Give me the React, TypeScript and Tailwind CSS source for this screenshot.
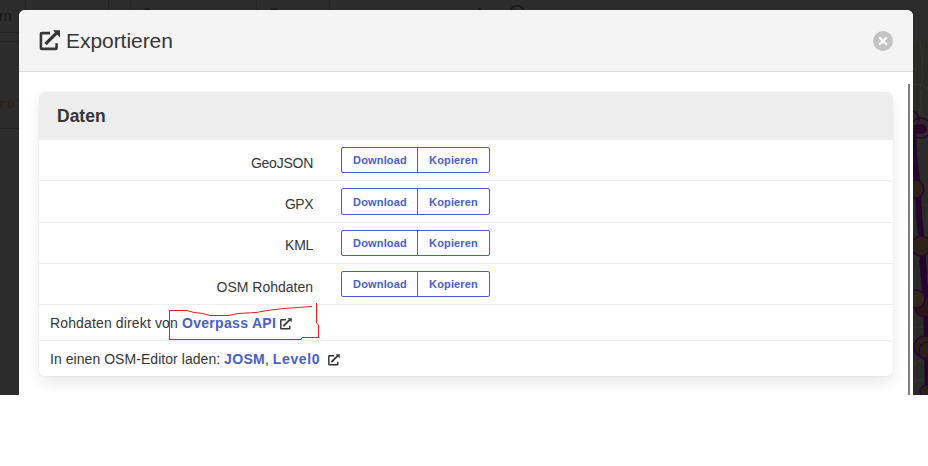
import React from 'react';

const rows = [
  { label: 'GeoJSON', row: 'h-[41px]', button: 'h-[26px]', text: 'pt-[13px] tracking-[-0.25px]', inner: '' },
  { label: 'GPX', row: 'h-[42px]', button: 'h-[27px]', text: 'pt-[13px] tracking-[-0.5px]', inner: 'pt-px' },
  { label: 'KML', row: 'h-[41px]', button: 'h-[26px]', text: 'pt-[12px] tracking-[-0.3px]', inner: '' },
  { label: 'OSM Rohdaten', row: 'h-[41px]', button: 'h-[26px]', text: 'pt-[13px]', inner: '' },
];

function ExternalIcon({ className }: { className: string }) {
  return (
    <svg viewBox="0 0 22 22" className={className} fill="none" stroke="#363636">
      <path d="M11 3.3H2.5Q1.5 3.3 1.5 4.3V18.8Q1.5 19.8 2.5 19.8H16.9Q17.9 19.8 17.9 18.8V14" strokeWidth="2.7" />
      <path d="M6.2 14.9L18 3.1" strokeWidth="3.4" />
      <path d="M14 .3H21.5V7.8Z" fill="#363636" stroke="none" />
    </svg>
  );
}

function Backdrop() {
  return (
    <svg className="absolute inset-0 h-[395px] w-full" viewBox="0 0 928 395">
      <path d="M25.5 0V32M108.5 0V10M130.5 0V10M256.5 0V10M329.5 0V10M0 32.5H19M0 41.5H19M0 128.5H19" stroke="#242424" fill="none" />
      <text x="-1" y="21" fontSize="14" fill="#171717" fontFamily="Liberation Sans, sans-serif">rn</text>
      <text x="-1" y="108" fontSize="13.5" fill="#431515" fontFamily="Liberation Mono, monospace">rol</text>
      <path d="M145 9.5h5M271 9.5h6M478 9.5h3" stroke="#151515" strokeWidth="2" />
      <circle cx="517" cy="12" r="6.5" fill="none" stroke="#181818" strokeWidth="1.5" />
      <rect x="913" y="41" width="15" height="354" fill="#2a2b28" />
      <path d="M920 41l2 20 1 14-3 14 2 28M913 85l7-1 8 5M922 90l-3 27M913 180l15 4M913 205h15M913 237l15 4M920 237v36M914 305l14-5M913 327h15M916 347l12 13M913 382l15-4" stroke="#343532" fill="none" />
      <path d="M923 48v15M925 125l-9 25M927 210v20M915 255l10 25M913 365l8-5 7 9" stroke="#303728" fill="none" />
      <path d="M913 128L914 155L918 189L919 215L922 246L924 275M922 260L926 300L927 347L928 395" fill="none" stroke="#25042e" strokeWidth="6" />
      <g stroke="#2b0730" fill="none" strokeWidth="1.5">
        <circle cx="911" cy="119" r="8" /><circle cx="921" cy="128" r="10" />
        <circle cx="915" cy="189" r="9" fill="#30201a" />
        <circle cx="921" cy="246" r="10" fill="#2d2119" />
        <circle cx="925" cy="307" r="10" fill="#2b1518" />
        <circle cx="916" cy="299" r="9" fill="#322819" />
        <circle cx="925" cy="347" r="11" fill="#2b2119" />
        <circle cx="928" cy="351" r="9" /><circle cx="927" cy="392" r="7" fill="#2b211b" />
      </g>
      <ellipse cx="920" cy="129" rx="7" ry="5" fill="#2b0428" />
    </svg>
  );
}

const buttonText = 'flex items-center justify-center text-[11px] font-bold tracking-[0.15px]';

export default function App() {
  return (
    <div className="h-[466px] overflow-hidden bg-white font-['Liberation_Sans',Arial,sans-serif] text-[14px] text-[#363636]">
      <div className="relative h-[395px] overflow-hidden bg-[#2c2c2c] px-[19px] pt-[10px]">
        <Backdrop />
        <main className="relative h-[385px] w-[894px] overflow-hidden rounded-t-[6px] bg-white">
          <header className="flex h-[62px] items-center border-b border-[#dbdbdb] bg-[#f4f4f4] pr-5 pb-px pl-5">
            <ExternalIcon className="h-[21px] w-[22px]" />
            <h1 className="ml-[5px] pt-px text-[21px] leading-[21px] tracking-[-0.05px] whitespace-nowrap">Exportieren</h1>
            <button aria-label="Schließen" className="mt-px ml-auto flex h-5 w-5 items-center justify-center rounded-full bg-[#c3c3c3]">
              <svg viewBox="0 0 10 10" className="h-[10px] w-[10px]"><path d="M1.2 1.2L8.8 8.8M8.8 1.2L1.2 8.8" stroke="white" strokeWidth="2.2" /></svg>
            </button>
          </header>
          <div className="flex h-[323px] pt-3 pl-5">
            <section className="mt-2 h-[284px] w-[854px] overflow-hidden rounded-[6px] bg-white shadow-[0_8px_16px_-2px_rgba(10,10,10,0.1),0_0_0_1px_rgba(10,10,10,0.02)]">
              <h2 className="flex h-12 items-center bg-[#ededed] pl-[18px] text-[17.5px] font-bold">Daten</h2>
              {rows.map((r) => (
                <div key={r.label} className={`${r.row} flex border-b border-[#ededed]`}>
                  <div className={`${r.text} w-[274px] text-right leading-5`}>{r.label}</div>
                  <div className="ml-7 pt-[7px]">
                    <div className={`${r.button} flex w-[149px] rounded-[2px] border border-[#485fc7] text-[#485fc7]`}>
                      <button className={`${buttonText} ${r.inner} w-[76px] border-r border-[#485fc7] pl-px`}>Download</button>
                      <button className={`${buttonText} ${r.inner} w-[71px]`}>Kopieren</button>
                    </div>
                  </div>
                </div>
              ))}
              <div className="flex h-9 items-center border-b border-[#ededed] pt-[2px] pl-[11px] whitespace-pre">
                <span className="tracking-[0.14px]">Rohdaten direkt von </span>
                <b className="tracking-[0.3px] text-[#485fc7]">Overpass API</b>
                <ExternalIcon className="ml-[3.5px] h-3 w-3" />
              </div>
              <div className="flex h-[35px] items-center pt-[2px] pl-[11px] whitespace-pre">
                <span className="tracking-[0.05px]">In einen OSM-Editor laden: </span>
                <b className="tracking-[0.3px] text-[#485fc7]">JOSM</b>
                <span>, </span>
                <b className="tracking-[0.65px] text-[#485fc7]">Level0</b>
                <ExternalIcon className="ml-[7.5px] h-3 w-3" />
              </div>
            </section>
            <div className="ml-[15px] w-[2px] bg-[#808080]" />
          </div>
        </main>
        <svg className="pointer-events-none absolute top-[300px] left-[160px] h-[45px] w-[170px]" viewBox="0 0 170 45" fill="none" stroke="#ed1c24">
          <path d="M9.5 39.5V10.5H27L34 12.5L43 13.5L50 15.5H68L78 13.5L96 12.5L107 10.5L124 8.5L152 6.5M156.5 3V23L158.5 25V37.5H142L141 39.5H9.5" />
        </svg>
      </div>
    </div>
  );
}
